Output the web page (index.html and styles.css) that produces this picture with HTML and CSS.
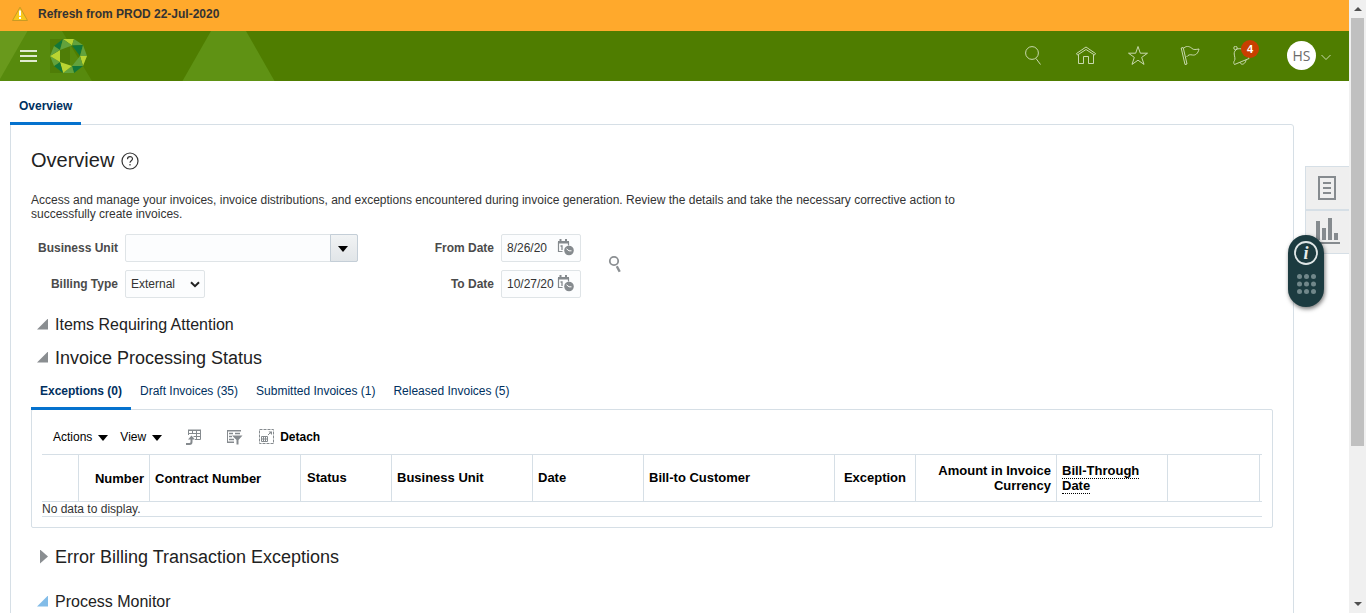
FILE: index.html
```html
<!DOCTYPE html>
<html lang="en">
<head>
<meta charset="utf-8">
<title>Overview</title>
<link rel="stylesheet" href="styles.css">
</head>
<body>
<div class="window">
<div class="page">
  <div class="alert">
    <svg class="alert-icon" width="18" height="16" viewBox="0 0 18 16"><path d="M9 1.200 16.500 14.500H1.500Z" fill="#f7c61c" stroke="#c99a24" stroke-linejoin="round"/><path d="M9 4.500v5.200M9 11v2" stroke="#fff" stroke-width="2"/></svg>
    <span>Refresh from PROD 22-Jul-2020</span>
  </div>
  <header class="header">
    <svg class="header-art" width="300" height="50" viewBox="0 0 300 50"><path d="M0 0H62L92 50H0Z" fill="#578a0d"/><path d="M0 0H27.500L0 48Z" fill="#69991c"/><path d="M211 0h35l28.500 50h-92Z" fill="#5f9214"/></svg>
    <button class="menu" aria-label="Menu"><i></i><i></i><i></i></button>
    <svg class="logo" width="38" height="34" viewBox="0 0 38 34">
      <path d="M0 0h20v34H0Z" fill="#4f7d07"/>
      <path d="M13 0H24L22 6.500Z" fill="#b9d432"/>
      <path d="M4 7 13 0 10 11Z" fill="#12773a"/>
      <path d="M13 0 22 6.500 10 11Z" fill="#62a23c"/>
      <path d="M24 0 33 6 22 6.500Z" fill="#62a23c"/>
      <path d="M33 6 30 17 22 6.500Z" fill="#12773a"/>
      <path d="M33 6 37 17H30Z" fill="#62a23c"/>
      <path d="M37 17 33 27 30 17Z" fill="#b9d432"/>
      <path d="M30 17 33 27H22Z" fill="#62a23c"/>
      <path d="M33 27 24 34 22 27Z" fill="#12773a"/>
      <path d="M24 34H13L22 27Z" fill="#62a23c"/>
      <path d="M13 34 22 27 10 23Z" fill="#b9d432"/>
      <path d="M13 34 4 27 10 23Z" fill="#12773a"/>
      <path d="M4 27 0 17 10 23Z" fill="#62a23c"/>
      <path d="M0 17 10 11V23Z" fill="#b9d432"/>
      <path d="M0 17 4 7 10 11Z" fill="#62a23c"/>
    </svg>
    <nav class="tools">
      <svg width="20" height="20" viewBox="0 0 20 20"><circle cx="8" cy="7" r="6.400"/><path d="m12 12.500 4.500 6"/></svg>
      <svg width="20" height="20" viewBox="0 0 20 20"><path d="M.5 7.500 10 1l9.500 6.500-1 1.500L10 3.500 1.500 9ZM2.500 9v8.500h5v-7h5v7h5V9"/></svg>
      <svg width="20" height="20" viewBox="0 0 20 20"><path d="m10 .5 2.300 6.700h7.200l-5.800 4.200 2.300 7-6-4.200-6 4.200 2.300-7L.5 7.200h7.200Z"/></svg>
      <svg width="20" height="20" viewBox="0 0 20 20"><path d="m1.200 2 3.800 16.500 2-.5L3.200 1.500ZM4 2c3-3 6.500-1 8 .5s4 1 7 .5c-1 5-4 6.500-6.500 6s-4-.5-6 2"/></svg>
      <span class="bell">
        <svg width="20" height="20" viewBox="0 0 20 20"><circle cx="3.500" cy="2" r="1.700"/><path d="M5 3C11 1.500 16 5.500 17 12.500L2.500 18.500c-1-1.500-1-2.500 0-4s0-4-.3-6.500c-.2-2 1-4 2.800-5M8.500 16.500c0 3 5 2 5.500-2.500"/></svg>
        <b class="badge">4</b>
      </span>
      <span class="avatar">HS</span>
      <svg class="chev" width="12" height="8" viewBox="0 0 12 8"><path d="m1.500 1 4.500 4.500L10.500 1"/></svg>
    </nav>
  </header>
  <div class="page-tabs"><a class="page-tab">Overview</a></div>
  <main class="panel">
    <h1 class="title">Overview
      <svg width="18" height="18" viewBox="0 0 18 18"><circle cx="9" cy="9" r="8" fill="none" stroke="#333" stroke-width="1.200"/><path d="M6.500 7.200c0-3.400 5-3.400 5-.4 0 2-2.500 1.800-2.500 4M9 12v1.500" fill="none" stroke="#333" stroke-width="1.200"/></svg>
    </h1>
    <p class="intro">Access and manage your invoices, invoice distributions, and exceptions encountered during invoice generation. Review the details and take the necessary corrective action to<br>successfully create invoices.</p>
    <form class="filters">
      <div class="fields left">
        <label>Business Unit</label>
        <div class="combo"><span></span><button type="button" aria-label="Open"><i class="caret"></i></button></div>
        <label>Billing Type</label>
        <div class="select">External<svg width="10" height="7" viewBox="0 0 10 7"><path d="m1 1.200 4 4 4-4" fill="none" stroke="#222" stroke-width="2"/></svg></div>
      </div>
      <div class="fields right">
        <label>From Date</label>
        <div class="date"><span>8/26/20</span><svg width="17" height="17" viewBox="0 0 17 17"><use href="#cal"/></svg></div>
        <label>To Date</label>
        <div class="date"><span>10/27/20</span><svg width="17" height="17" viewBox="0 0 17 17"><use href="#cal"/></svg></div>
      </div>
      <svg class="go" width="14" height="18" viewBox="0 0 14 18"><circle cx="6" cy="6" r="4.200" fill="none" stroke="#8b8f92" stroke-width="1.800"/><path d="m8.800 11.200 2.900 5.600" stroke="#8b8f92" stroke-width="2.400"/></svg>
    </form>
    <h2 class="section small"><i class="tri open"></i>Items Requiring Attention</h2>
    <h2 class="section status"><i class="tri open"></i>Invoice Processing Status</h2>
    <div class="tabs"><a class="tab on">Exceptions (0)</a><a class="tab">Draft Invoices (35)</a><a class="tab">Submitted Invoices (1)</a><a class="tab">Released Invoices (5)</a></div>
    <section class="box">
      <div class="toolbar">
        <span class="drop">Actions<i class="caret"></i></span>
        <span class="drop view">View<i class="caret"></i></span>
        <svg class="t1" width="16" height="16" viewBox="0 0 16 16"><path d="M2.500 6V1.500h12v9H9M2.500 4.500h12M7.500 7.500h7M6.500 1v4M10.500 1v9.500" fill="none" stroke="#858a8e"/><path d="M2 .5h13v1.500H2Z" fill="#858a8e"/><path d="M0 15h3.500q2 0 2-2V9" fill="none" stroke="#858a8e" stroke-width="2"/><path d="M2 10.500 5.500 6.500l3.500 4Z" fill="#858a8e"/></svg>
        <svg class="t2" width="17" height="16" viewBox="0 0 17 16"><path d="M1 1h14v1.500H1ZM1 12.500h7V14H1ZM1 1h1v12H1Z" fill="#858a8e"/><path d="M3 4.500h4M9 4.500h5M3 7.500h3M3 10.500h5" stroke="#858a8e" stroke-width="1.300"/><path d="M6 6.500h10.500l-4 4.500v4.500h-2V11Z" fill="#858a8e"/></svg>
        <svg class="t3" width="16" height="16" viewBox="0 0 16 16"><rect x=".5" y=".5" width="14" height="14" fill="none" stroke="#858a8e" stroke-dasharray="3 1"/><path d="M2.500 7.500h6v5h-6ZM2.500 10h6M4.500 7.500v5M6.500 7.500v5M9 6l3-3" fill="none" stroke="#858a8e"/><path d="M9.500 2.500H13V6Z" fill="#858a8e"/></svg>
        <b>Detach</b>
      </div>
      <div class="thead">
        <div></div><div class="num low">Number</div><div class="low">Contract Number</div><div class="status-col">Status</div><div>Business Unit</div><div>Date</div><div>Bill-to Customer</div><div class="num exc">Exception</div><div class="num">Amount in Invoice<br>Currency</div><div><span><abbr>Bill-Through</abbr><br><abbr>Date</abbr></span></div><div></div>
      </div>
      <div class="empty">No data to display.</div>
    </section>
    <h2 class="section error"><i class="tri closed"></i>Error Billing Transaction Exceptions</h2>
    <h2 class="section small monitor"><i class="tri open blue"></i>Process Monitor</h2>
  </main>
  <aside class="side">
    <div><svg width="18" height="24" viewBox="0 0 18 24"><path d="M1 1h16v22H1Z" fill="none" stroke="#868b8f" stroke-width="2"/><path d="M5 7h8M5 12h8M5 17h8" stroke="#868b8f" stroke-width="2"/></svg></div>
    <div><svg width="24" height="26" viewBox="0 0 24 26"><path d="M0 3h4v19H0ZM6 10h4v12H6ZM12 0h4v22h-4ZM18 15h4v7h-4ZM0 24h24v2H0Z" fill="#868b8f"/></svg></div>
  </aside>
  <div class="guide">
    <svg width="36" height="72" viewBox="0 0 36 72"><circle cx="18" cy="18" r="11" fill="none" stroke="#dfe6e6" stroke-width="1.800"/><text x="18" y="24" text-anchor="middle" font-family="Liberation Serif, serif" font-size="18" font-weight="bold" font-style="italic" fill="#e8eeee">i</text><g fill="#71878a"><circle cx="11.500" cy="41.500" r="2.500"/><circle cx="18.500" cy="41.500" r="2.500"/><circle cx="25.500" cy="41.500" r="2.500"/><circle cx="11.500" cy="49" r="2.500"/><circle cx="18.500" cy="49" r="2.500"/><circle cx="25.500" cy="49" r="2.500"/><circle cx="11.500" cy="56.500" r="2.500"/><circle cx="18.500" cy="56.500" r="2.500"/><circle cx="25.500" cy="56.500" r="2.500"/></g></svg>
  </div>
</div>
<div class="scroll"><i class="arrow up"></i><div class="thumb"></div><i class="arrow down"></i></div>
</div>
<svg class="defs" width="0" height="0"><defs><g id="cal"><path d="M5.500 12.500h-4v-9h10v3" fill="none" stroke="#858a8e" stroke-width="1.200"/><path d="M1 2h11v2.500H1ZM2.500 0h2v3h-2ZM8 0h2v3H8Z" fill="#858a8e"/><path d="M3.500 7H5v4" fill="none" stroke="#858a8e" stroke-width="1.300"/><circle cx="12" cy="11.500" r="4.800" fill="#858a8e"/><path d="m9.500 9.800 2.500 2h2.500" fill="none" stroke="#fff"/></g></defs></svg>
</body>
</html>
```

FILE: styles.css
```css
* { box-sizing: border-box; }
body { margin: 0; overflow: hidden; background: #fff; color: #333; font: 12px/14px "Liberation Sans", Arial, sans-serif; }
h1, h2, p { margin: 0; font-weight: normal; }
button { padding: 0; border: 0; background: none; }
.window { display: flex; height: 613px; overflow: hidden; }
.page { position: relative; flex: 1; height: 613px; overflow: hidden; }
.defs { position: absolute; }

.alert { display: flex; height: 31px; padding: 6px 0 0 11px; background: #ffa92c; font-weight: bold; line-height: 16px; }
.alert span { margin-left: 9px; }

.header { position: relative; display: flex; align-items: center; height: 50px; padding-left: 20px; background: #4f7d00; }
.header-art { position: absolute; left: 0; top: 0; }
.menu { position: relative; display: grid; gap: 3px; width: 17px; }
.menu i { height: 2px; background: #dfead0; }
.logo { position: relative; margin-left: 13px; }
.tools { display: flex; align-items: center; margin-left: auto; padding-right: 17px; }
.tools svg { fill: none; stroke: #d5e2bf; stroke-width: .9; margin-right: 32px; }
.bell { position: relative; display: flex; margin-right: 3px; }
.badge { position: absolute; left: 9px; top: -6px; width: 18px; height: 18px; border-radius: 50%; background: #c83f00; color: #fff; font-size: 11px; line-height: 18px; text-align: center; }
.avatar { width: 29px; height: 29px; margin-top: -1px; border-radius: 50%; background: #fff; color: #6b6b6b; font: 14px/29px "Open Sans", sans-serif; text-align: center; }
.tools .chev { margin: 3px 0 0 4px; }

.page-tabs { display: flex; height: 43px; padding-left: 10px; }
.page-tab { position: relative; z-index: 1; width: 71px; height: 44px; padding: 18px 9px 0; border-bottom: 3px solid #0572ce; color: #003060; font-weight: bold; }

.panel { width: 1284px; height: 520px; margin-left: 10px; padding: 0 20px; border: 1px solid #d6dfe6; border-radius: 0 3px 0 0; }
.title { display: flex; align-items: center; gap: 7px; height: 70px; font-size: 20px; line-height: 24px; color: #222; }
.title svg { margin-top: 1px; }
.intro { height: 39px; margin-top: -2px; }

.filters { display: flex; margin-bottom: 10px; }
.fields { display: grid; grid-auto-rows: 28px; align-items: center; gap: 8px 7px; margin-top: 2px; }
.left { grid-template-columns: 87px 233px; }
.right { grid-template-columns: 100px 80px; margin-left: 36px; }
.fields label { text-align: right; font-weight: bold; color: #4b4b4b; }
.combo, .select, .date { display: flex; align-items: center; height: 28px; border: 1px solid #dfe4e7; border-radius: 2px; background: #fcfdfe; }
.combo button { display: grid; place-items: center; width: 28px; height: 28px; margin: 0 -1px 0 auto; border: 1px solid #c4ced7; border-radius: 0 2px 2px 0; background: linear-gradient(#f1f3f4, #e1e5e8); }
.caret { border: 5px solid transparent; border-top: 6px solid #000; border-bottom: 0; }
.combo .caret { margin: 1px 2px 0 0; }
.select { width: 80px; padding: 0 4px 0 5px; justify-content: space-between; }
.date { padding: 0 6px 0 5px; justify-content: space-between; }
.date svg { margin: -2px 0 0 -1px; flex: none; }
.go { margin: 23px 0 0 27px; }

.section { display: flex; align-items: center; height: 33px; padding-left: 6px; font-size: 18px; line-height: 22px; color: #222; }
.small { font-size: 16px; }
.tri { width: 11px; height: 11px; margin: -1px 7px 0 0; background: #8a8e91; }
.open { clip-path: polygon(100% 0, 100% 100%, 0 100%); }
.closed { width: 8px; height: 14px; margin: -1px 7px 0 3px; clip-path: polygon(0 0, 100% 50%, 0 100%); }
.blue { background: #82bce8; }

.tabs { display: flex; height: 35px; }
.tab { padding: 10px 9px 0; color: #003060; white-space: nowrap; }
.on { position: relative; z-index: 1; height: 36px; width: 100px; border-bottom: 3px solid #0572ce; font-weight: bold; }
.box { width: 1242px; height: 119px; padding: 0 10px; border: 1px solid #d6dfe6; border-radius: 2px; color: #000; }
.toolbar { display: flex; align-items: center; height: 44px; padding: 9px 0 0 11px; }
.drop { display: flex; align-items: center; gap: 6px; }
.drop .caret { margin-top: 2px; }
.view { margin-left: 12px; }
.t1 { margin-left: 24px; }
.t2 { margin-left: 24px; }
.t3 { margin: 0 5px 0 16px; }
.thead { display: grid; grid-template-columns: 37px 71px 151px 91px 141px 111px 191px 81px 141px 111px 92px; height: 48px; border-top: 1px solid #d6dfe6; border-bottom: 1px solid #d6dfe6; font: bold 13px/15px "Liberation Sans", Arial, sans-serif; }
.thead > div { display: flex; align-items: center; padding: 0 5px 1px; border-right: 1px solid #d6dfe6; }
.thead .num { justify-content: flex-end; text-align: right; }
.thead .low { padding-bottom: 0; }
.thead .status-col { padding-left: 6px; }
.thead .exc { padding-right: 9px; }
.thead abbr { border-bottom: 1px dotted #000; text-decoration: none; }
.empty { height: 15px; border-bottom: 1px solid #d6dfe6; color: #333; }
.error { margin-top: 12px; height: 34px; }
.monitor { margin-top: 11px; }

.side { position: absolute; right: 0; top: 166px; width: 44px; border: 1px solid #d6dfe6; border-right: 0; background: #efefef; }
.side div { display: grid; place-items: center; height: 42px; padding: 0 2px 0 0; }
.side div + div { height: 44px; border-top: 2px solid #d6dfe6; padding: 0 0 2px; }
.guide { position: absolute; left: 1288px; top: 235px; width: 36px; height: 72px; border-radius: 18px; background: #1c3b40; box-shadow: 1px 2px 4px #0008; }
.scroll { display: flex; flex-direction: column; align-items: center; width: 17px; background: #f0f0f0; }
.thumb { width: 13px; height: 428px; margin-top: 7px; background: #c0c0c0; }
.arrow { border: 4px solid transparent; }
.up { margin-top: 7px; border-top: 0; border-bottom-color: #505050; }
.down { margin: auto 0 7px; border-bottom: 0; border-top-color: #505050; }
```
